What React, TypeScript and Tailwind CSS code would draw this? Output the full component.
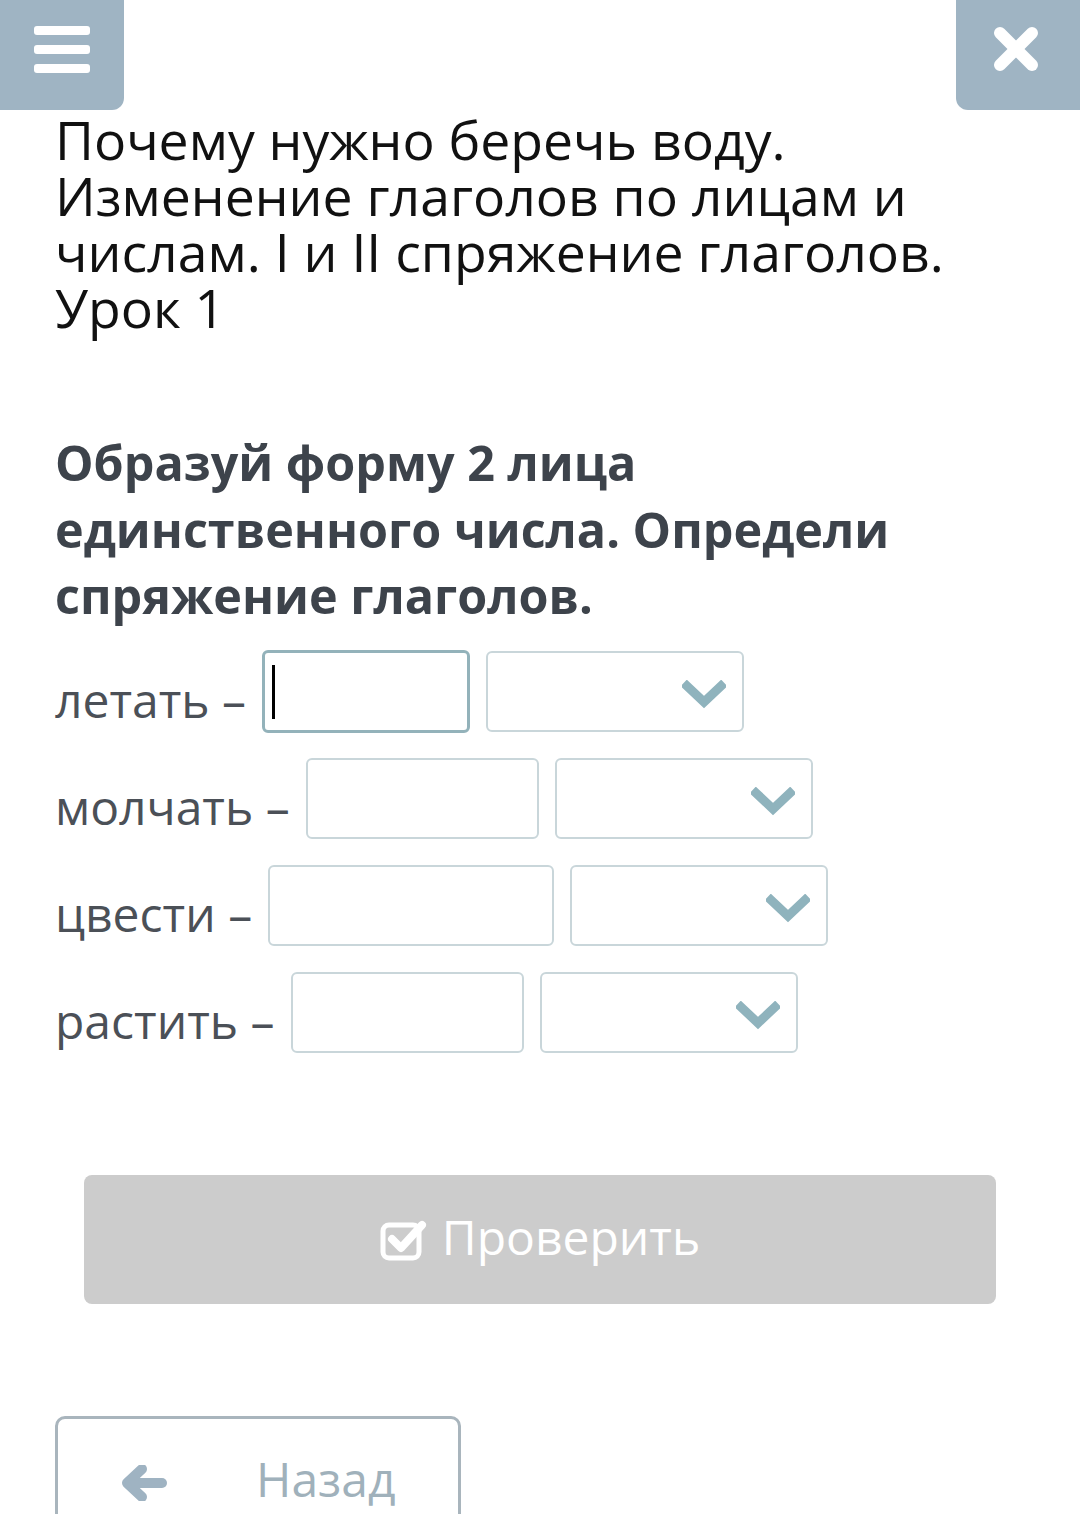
import React from "react";

const Chevron = () => (
  <svg width="44" height="30" viewBox="0 0 44 30" className="absolute right-[16px] top-[27px]">
    <polyline points="5,6 22,22 39,6" fill="none" stroke="#8fb3bd" strokeWidth="9" strokeLinecap="square" strokeLinejoin="miter" />
  </svg>
);

type Row = { label: string; inputW: number; focused?: boolean };

const rows: Row[] = [
  { label: "летать –", inputW: 208, focused: true },
  { label: "молчать –", inputW: 233 },
  { label: "цвести –", inputW: 286 },
  { label: "растить –", inputW: 233 },
];

export default function App() {
  return (
    <div className="w-[1080px] h-[1514px] overflow-hidden bg-white font-['Open_Sans',sans-serif]">
      <div className="flex justify-between">
        <div className="w-[124px] h-[110px] bg-[#9fb4c3] rounded-br-[12px] flex flex-col items-center justify-center gap-[10px] pb-[12px]">
          <div className="w-[56px] h-[9px] rounded-[3px] bg-white" />
          <div className="w-[56px] h-[9px] rounded-[3px] bg-white" />
          <div className="w-[56px] h-[9px] rounded-[3px] bg-white" />
        </div>
        <div className="w-[124px] h-[110px] bg-[#9fb4c3] rounded-bl-[12px] flex items-center justify-center pb-[12px] pr-[4px]">
          <svg width="48" height="48" viewBox="0 0 48 48">
            <line x1="8" y1="8" x2="40" y2="40" stroke="white" strokeWidth="12" strokeLinecap="round" />
            <line x1="40" y1="8" x2="8" y2="40" stroke="white" strokeWidth="12" strokeLinecap="round" />
          </svg>
        </div>
      </div>

      <div className="px-[55px]">
        <h1 className="text-[53.5px] leading-[56px] text-[#111111] font-normal pt-[2px]">
          Почему нужно беречь воду. Изменение глаголов по лицам и числам. I и II спряжение глаголов. Урок 1
        </h1>
        <h2 className="mt-[93px] text-[48.5px] leading-[66.5px] font-bold text-[#3d434b]">
          Образуй форму 2 лица единственного числа. Определи спряжение глаголов.
        </h2>

        <div className="mt-[22px] flex flex-col gap-[26px]">
          {rows.map((r) => (
            <div key={r.label} className="flex items-center h-[81px]">
              <span className="text-[48px] leading-none text-[#4b5057] whitespace-nowrap mr-[16px] pt-[18px]">{r.label}</span>
              <div
                className={
                  r.focused
                    ? "relative h-[83px] rounded-[6px] border-[3px] border-[#93b2ba] bg-white"
                    : "relative h-[81px] rounded-[6px] border-[2px] border-[#c9d6da] bg-white"
                }
                style={{ width: r.inputW }}
              >
                {r.focused && <div className="absolute left-[7px] top-[12px] w-[3px] h-[54px] bg-black" />}
              </div>
              <div className="relative ml-[16px] w-[258px] h-[81px] rounded-[6px] border-[2px] border-[#c9d6da] bg-white">
                <Chevron />
              </div>
            </div>
          ))}
        </div>
      </div>

      <div className="ml-[84px] mt-[122px] w-[912px] h-[129px] rounded-[8px] bg-[#cccccc] flex items-center justify-center gap-[14px]">
        <svg width="48" height="44" viewBox="0 0 48 44">
          <rect x="3" y="8" width="36" height="33" rx="6" fill="none" stroke="white" strokeWidth="5" />
          <polyline points="12,22 21,31 42,8" fill="none" stroke="white" strokeWidth="8" strokeLinecap="round" strokeLinejoin="round" />
        </svg>
        <span className="text-[48px] text-white leading-none pb-[4px]">Проверить</span>
      </div>

      <div className="ml-[55px] mt-[112px] w-[406px] h-[140px] rounded-[10px] border-[3px] border-[#a9b5bd] flex items-start pt-[36px]">
        <svg width="46" height="36" viewBox="0 0 46 36" className="ml-[64px] mt-[10px]">
          <path d="M20 4 L5 18 L20 32" fill="none" stroke="#9fb3c2" strokeWidth="10" strokeLinecap="round" strokeLinejoin="round" />
          <line x1="8" y1="18" x2="40" y2="18" stroke="#9fb3c2" strokeWidth="10" strokeLinecap="round" />
        </svg>
        <span className="ml-[88px] text-[48px] text-[#a0b1bb] leading-none">Назад</span>
      </div>
    </div>
  );
}
